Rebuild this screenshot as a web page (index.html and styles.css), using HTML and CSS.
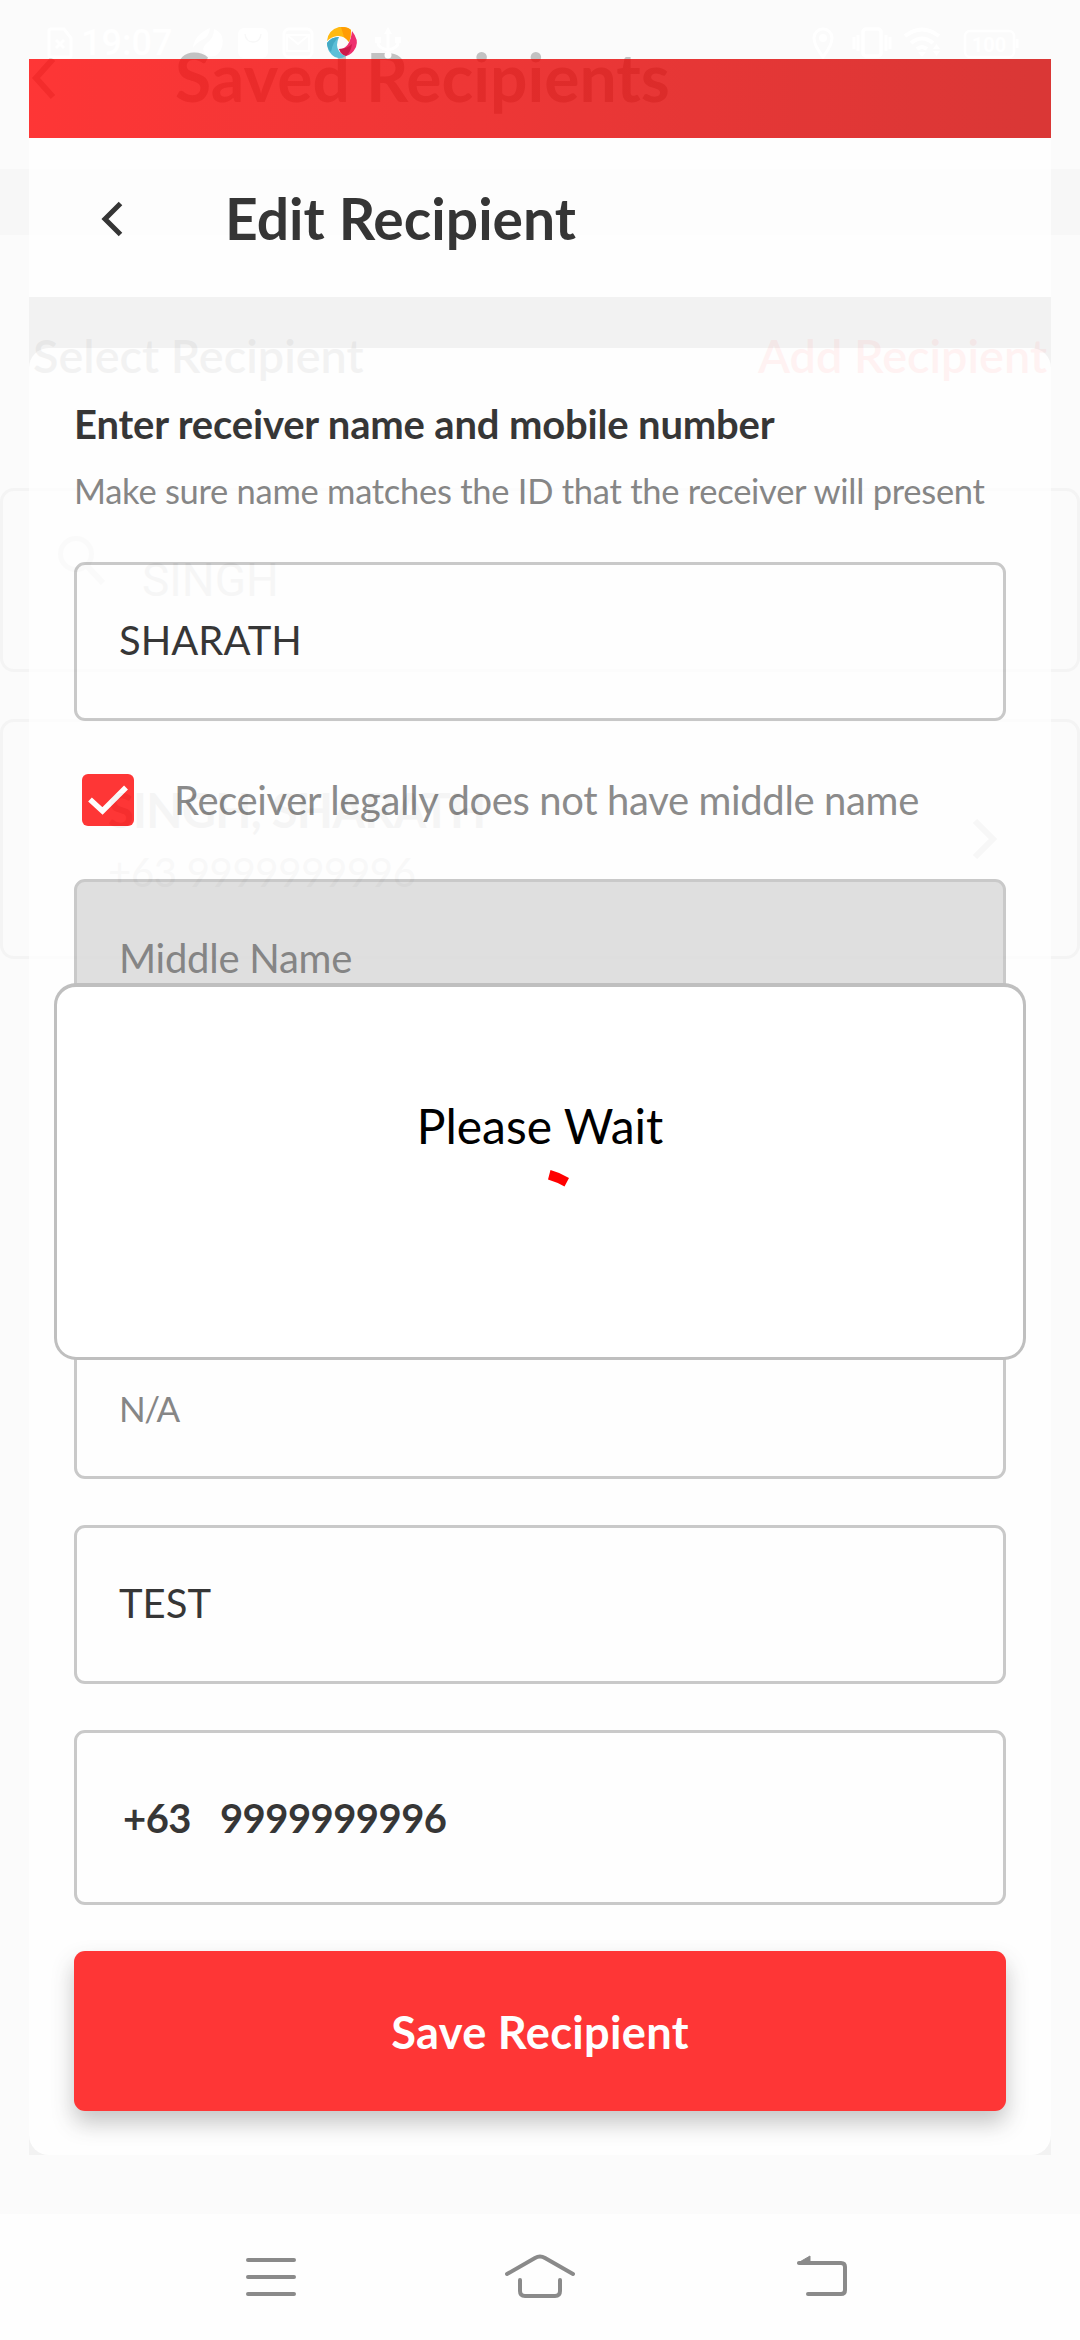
FILE: index.html
```html
<!DOCTYPE html>
<html lang="en">
<head>
<meta charset="utf-8">
<title>Edit Recipient</title>
<link rel="stylesheet" href="styles.css">
</head>
<body>
<div class="screen">
  <div class="backdrop">
    <div class="backdrop-header">
      <svg class="backdrop-back" width="30" height="44" viewBox="0 0 30 44"><path d="M22 3 5 22l17 19" fill="none" stroke="currentColor" stroke-width="6"/></svg>
      <span class="backdrop-title">Saved Recipients</span>
    </div>
    <div class="backdrop-band"></div>
    <div class="backdrop-row"><span>Select Recipient</span><span class="backdrop-add">Add Recipient</span></div>
    <div class="backdrop-search">
      <svg width="50" height="54" viewBox="0 0 50 54"><circle cx="19" cy="19" r="15.5" fill="none" stroke="currentColor" stroke-width="5"/><path d="M30 31 46 48" stroke="currentColor" stroke-width="6"/></svg>
      <span>SINGH</span>
    </div>
    <div class="backdrop-person">
      <div class="person-lines"><span class="person-name">SINGH, SHARATH</span><span class="person-phone">+63 9999999996</span></div>
      <svg width="28" height="44" viewBox="0 0 28 44"><path d="M5 4 23 22 5 40" fill="none" stroke="currentColor" stroke-width="6"/></svg>
    </div>
  </div>

  <div class="status">
    <svg class="status-sim" width="26" height="32" viewBox="0 0 26 32"><path d="M4 2h13l7 9v17q0 2-2 2H4q-2 0-2-2V4q0-2 2-2zM9 13l8 8m0-8-8 8" fill="none" stroke="#fff" stroke-width="3"/></svg>
    <span class="status-time">19:07</span>
    <svg class="status-apps" width="216" height="32" viewBox="0 0 216 32">
      <path d="M1 21Q2 8 18 1q-1 9-8 12-6 3-9 8zM22 2q11 4 8 18-4 12-14 9-9-6-1-13 7-5 7-14z" fill="#fff"/>
      <rect x="46" y="1" width="30" height="30" rx="6" fill="#fff"/><path d="M53 7q1 8 8 8t8-8" fill="none" stroke="#f8f8f8" stroke-width="1.5"/>
      <rect x="92" y="2" width="28" height="28" rx="5" fill="none" stroke="#fff" stroke-width="3"/><path d="M95 8h22v16H95zl11 9 11-9" fill="none" stroke="#fff" stroke-width="2"/>
      <g transform="translate(135 0)">
        <path d="M0 14Q1 3 12 0q8-1 12 3 0 7-2 12-5-7-12-6-6 1-10 5z" fill="#ffb911"/><path d="M14 0q7 0 10 3 0 7-2 12-2-3-5-5z" fill="#ff9c05"/>
        <path d="M25 4q7 9 4 16-4 8-10 9-5-1-7-7 11 0 13-18z" fill="#ee2f6e"/><path d="M12 22q8 0 13-5-1 8-6 12-4-1-7-7z" fill="#cc1a48"/>
        <path d="M0 16q4-6 12-6-4 9 0 14 2 4 7 5-8 5-14-1-5-5-5-12z" fill="#5cbfd8"/><path d="M0 16q4-6 12-6-6 4-8 15-4-4-4-9z" fill="#43a9c4"/>
      </g>
      <path d="M196 30V4m-10 9v3q0 5 10 7m10-10v3q0 5-10 7" fill="none" stroke="#fff" stroke-width="3"/><path d="m196 0-4 7h8zM183 10h6v6h-6zM203 10h6v6h-6z" fill="#fff"/><circle cx="196" cy="28" r="3.5" fill="#fff"/>
    </svg>
    <svg class="status-system" width="208" height="32" viewBox="0 0 208 32">
      <path d="M11 30C5 22 2 17 2 11a9 9 0 0 1 18 0c0 6-3 11-9 19z" fill="none" stroke="#fff" stroke-width="3"/><circle cx="11" cy="11" r="4" fill="#fff"/>
      <rect x="51" y="2" width="18" height="27" rx="3" fill="none" stroke="#fff" stroke-width="3.5"/><path d="M42 10v12M46 8v16M74 8v16M78 10v12" stroke="#fff" stroke-width="3"/>
      <path d="M93 9q17-13 34 0M99 16q11-9 22 0M105 22q5-4 10 0" fill="none" stroke="#fff" stroke-width="4"/><path d="m106 25 4 5 4-5zm15-1h7l-3.5 5zm0-2h7l-3.5-5z" fill="#fff"/>
      <rect x="153" y="4" width="49" height="26" rx="5" fill="none" stroke="#fff" stroke-width="2.5"/><path d="M205 12v9" stroke="#fff" stroke-width="3"/>
      <text x="177" y="24.500" text-anchor="middle" class="battery">100</text>
    </svg>
  </div>

  <main class="sheet">
    <div class="sheet-strip"></div>
    <header class="sheet-header">
      <svg width="24" height="38" viewBox="0 0 24 38"><path d="M20.500 4.500 5 20l15.500 15.500" fill="none" stroke="currentColor" stroke-width="5"/></svg>
      <h1>Edit Recipient</h1>
    </header>
    <form class="card">
      <h2>Enter receiver name and mobile number</h2>
      <p class="hint">Make sure name matches the ID that the receiver will present</p>
      <div class="field first-name">SHARATH</div>
      <div class="check-row">
        <span class="checkbox"><svg width="52" height="52" viewBox="0 0 52 52"><path d="M8 25.500 20.500 37 44 13.500" fill="none" stroke="#fff" stroke-width="5.500"/></svg></span>
        <span class="check-label">Receiver legally does not have middle name</span>
      </div>
      <div class="field disabled">Middle Name</div>
      <div class="field"></div>
      <div class="field suffix">N/A</div>
      <div class="field surname">TEST</div>
      <div class="field phone"><span class="code">+63</span><span class="number">9999999996</span></div>
      <div class="save">Save Recipient</div>
    </form>
  </main>

  <div class="dialog">
    <span class="dialog-text">Please Wait</span>
    <svg class="spinner" width="60" height="60" viewBox="0 0 60 60"><path d="m40.500 4q9.500 2.500 18.500 8l-4.500 8.500q-8-4.500-16.500-7z" fill="#f00"/></svg>
  </div>

  <nav class="navbar">
    <svg width="54" height="48" viewBox="0 0 54 48"><path d="M4 7h46M4 24h46M4 41h46"/></svg>
    <svg width="74" height="48" viewBox="0 0 74 48"><path d="M4 21 32 5q5-3 10 0l28 16M17 27v11q0 5 5 5h30q5 0 5-5V27"/></svg>
    <svg class="nav-back" width="54" height="48" viewBox="0 0 54 48"><path d="M4 10h42q4 0 4 4v23q0 4-4 4H13"/><path d="M3 10 15 3v7z" class="arrowhead"/></svg>
  </nav>
</div>
</body>
</html>
```
FILE: styles.css
```css
* { box-sizing: border-box; }
body { margin: 0; font-family: Lato, "Liberation Sans", sans-serif; }
svg { display: block; flex: none; }
.screen { position: relative; width: 1080px; height: 2340px; background: #fbfbfb; overflow: hidden; display: flex; flex-direction: column; padding-top: 59px; }

/* faded list page behind the sheet */
.backdrop { position: absolute; inset: 0; color: #c2c2c2; display: flex; flex-direction: column; white-space: nowrap; }
.backdrop-header { height: 169px; flex: none; display: flex; align-items: flex-start; padding: 38px 0 0 31px; }
.backdrop-back { margin-top: 18px; color: #c8c8c8; }
.backdrop-title { margin-left: 114px; font-size: 66px; line-height: 77px; font-weight: 700; }
.backdrop-band { height: 66px; flex: none; background: #f7f7f7; }
.backdrop-row { display: flex; justify-content: space-between; padding: 92px 33px 0; height: 253px; flex: none; font-size: 46.800px; line-height: 56px; font-weight: 600; }
.backdrop-add { color: #ffc0c0; }
.backdrop-search { height: 184px; flex: none; border: 3px solid #f4f4f4; border-radius: 14px; display: flex; align-items: flex-start; padding: 44px 0 0 54px; gap: 35px; color: #e8e8e8; font: 46px/54px Roboto, sans-serif; }
.backdrop-search span { margin-top: 18px; color: #d4d4d4; }
.backdrop-person { margin-top: 47px; height: 240px; flex: none; border: 3px solid #f4f4f4; border-radius: 14px; display: flex; align-items: center; justify-content: space-between; padding: 0 79px 0 105px; }
.backdrop-person svg { color: #d8d8d8; }
.person-lines { display: flex; flex-direction: column; padding-top: 3px; }
.person-name { font-size: 47px; line-height: 58px; font-weight: 700; letter-spacing: -.7px; color: #cfcfcf; }
.person-phone { margin-top: 5px; font-size: 40px; line-height: 56px; letter-spacing: -.3px; color: #dcdcdc; }

.status { position: absolute; left: 0; right: 0; top: 27px; height: 32px; display: flex; align-items: center; padding: 0 49px 0 47px; color: #fff; }
.status-time { margin-left: 8px; width: 99px; font: 500 36px/32px Roboto, sans-serif; }
.status-apps { margin-left: 12px; }
.status-system { margin-left: auto; margin-right: 11px; }
.battery { font: 700 20px Roboto, sans-serif; fill: #fff; }

.sheet { position: relative; margin: 0 29px; height: 2096px; flex: none; opacity: .8; background: #f1f1f1; color: #050505; }
.sheet-strip { height: 79px; background: linear-gradient(90deg, #ff0606, #d20705); }
.sheet-header { height: 159px; background: #fff; display: flex; align-items: center; padding-left: 71px; gap: 101px; }
h1 { margin: 0; font-size: 57px; line-height: 68px; font-weight: 700; }
.card { margin-top: 51px; height: 1807px; background: #fff; border-radius: 20px; padding: 52px 45px 0; }
h2 { margin: 0; font-size: 40px; line-height: 48px; font-weight: 700; letter-spacing: -.18px; white-space: nowrap; }
.hint { margin: 22px 0 50px; font-size: 34.500px; line-height: 42px; letter-spacing: -.27px; color: #6a6a6a; white-space: nowrap; }
.field { height: 159px; margin-bottom: 46px; border: 3px solid #bdbdbd; border-radius: 11px; padding: 0 42px 4px; font-size: 40px; display: flex; align-items: center; }
.check-row { display: flex; align-items: center; height: 52px; margin: 53px 0; padding-left: 8px; }
.checkbox { width: 52px; height: 52px; border-radius: 6px; background: #ff0606; }
.check-label { margin-left: 40px; font-size: 40px; letter-spacing: -.36px; color: #707070; white-space: nowrap; }
.first-name { margin-bottom: 0; }
.disabled { background: #d9d9d9; color: #686868; padding-bottom: 2px; letter-spacing: -.25px; }
.suffix { height: 190px; padding-top: 48px; padding-bottom: 0; font-size: 35px; letter-spacing: -1.500px; color: #6a6a6a; }
.phone { height: 175px; font-weight: 700; letter-spacing: -.55px; gap: 29px; padding: 0 46px; }
.save { height: 160px; border-radius: 11px; background: #ff0606; color: #fff; font-size: 45.200px; letter-spacing: .3px; font-weight: 700; display: flex; align-items: center; justify-content: center; box-shadow: 0 12px 22px rgba(0, 0, 0, .28); }

.dialog { position: absolute; left: 54px; top: 983px; width: 972px; height: 377px; background: #fff; border: 3px solid #bfbfbf; border-top-width: 4px; border-radius: 22px; display: flex; flex-direction: column; align-items: center; padding-top: 110px; color: #000; }
.dialog-text { font-size: 48px; line-height: 58px; }
.spinner { margin-top: 11px; }

.navbar { margin-top: auto; height: 126px; background: #fefefe; display: flex; gap: 205px; align-items: flex-start; padding: 39px 0 0 244px; position: relative; }
.nav-back { margin-left: 13px; }
.navbar path { fill: none; stroke: #8a8a8a; stroke-width: 4; stroke-linecap: round; stroke-linejoin: round; }
.navbar .arrowhead { fill: #8a8a8a; stroke-width: 1; }
```
